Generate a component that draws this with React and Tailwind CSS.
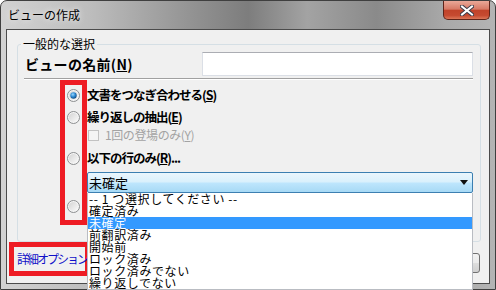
import React from "react";

function Radio({ checked }) {
  return (
    <svg width="13" height="13" viewBox="0 0 13 13" className="shrink-0">
      <defs>
        <linearGradient id="rbIn" x1="0" y1="0" x2="1" y2="1">
          <stop offset="0" stopColor="#d4d4d4" />
          <stop offset="1" stopColor="#fafafa" />
        </linearGradient>
        <radialGradient id="rbDot" cx="0.4" cy="0.35" r="0.75">
          <stop offset="0" stopColor="#9ad8ff" />
          <stop offset="0.5" stopColor="#2a86d0" />
          <stop offset="1" stopColor="#0d3a6a" />
        </radialGradient>
      </defs>
      <circle cx="6.5" cy="6.5" r="6" fill="#f6f6f6" stroke="#8c8e90" strokeWidth="1" />
      <circle cx="6.5" cy="6.5" r="4.6" fill="url(#rbIn)" />
      {checked && <circle cx="6.5" cy="6.5" r="3.2" fill="url(#rbDot)" />}
    </svg>
  );
}

const items = [
  "-- 1 つ選択してください --",
  "確定済み",
  "未確定",
  "前翻訳済み",
  "開始前",
  "ロック済み",
  "ロック済みでない",
  "繰り返しでない",
];

export default function App() {
  return (
    <div className="relative w-[496px] h-[290px] overflow-hidden bg-white font-['Noto_Sans_CJK_JP',sans-serif] text-black">
      <div className="flex flex-col h-[290px] border border-[#3f3f3f] rounded-t-[7px] bg-[linear-gradient(90deg,#d2d2d2_0%,#bdbdbd_18%,#949494_38%,#7d7d7d_50%,#a3a3a3_62%,#8a8a8a_76%,#a9a9a9_90%,#b4b4b4_100%)]">
        {/* title bar */}
        <div className="flex h-[28px] items-start pl-[7px]">
          <span className="mt-[6px] text-[12px] leading-[16px] [text-shadow:0_0_6px_#ffffff]">ビューの作成</span>
          <div className="ml-auto mr-[5px] w-[47px] h-[19px] flex items-center justify-center border border-t-0 border-[#5e2419] rounded-b-[5px] bg-[linear-gradient(180deg,#eaa898_0%,#d77a66_45%,#c1432a_52%,#c54a30_80%,#dc7658_100%)]">
            <svg width="14" height="11" viewBox="0 0 14 11">
              <path d="M2 1.5 L12 9.5 M12 1.5 L2 9.5" stroke="#3b3b48" strokeWidth="4" strokeLinecap="square" />
              <path d="M2 1.5 L12 9.5 M12 1.5 L2 9.5" stroke="#ffffff" strokeWidth="2" strokeLinecap="square" />
            </svg>
          </div>
        </div>
        {/* body */}
        <div className="flex-1 flex px-[5px] pb-[5px]">
          <div className="flex-1 flex flex-col border border-[#4b4b4b] bg-[#f0f0f0]">
            <fieldset className="mt-[7px] ml-[10px] mr-[8px] border border-[#d5dfe5] rounded-[3px] pb-[27px]">
              <legend className="ml-[3px] px-[2px] text-[12px] leading-[14px]">一般的な選択</legend>
              {/* name row */}
              <div className="mt-[1px] flex items-center pl-[7px] pr-[7px]">
                <span className="text-[14px] font-bold leading-[18px] tracking-[0.3px]">
                  ビューの名前(<span className="underline">N</span>)
                </span>
                <div className="ml-auto w-[271px] h-[24px] bg-white border border-[#dbdfe6] border-t-[#abadb3]" />
              </div>
              <div className="mt-[2px] ml-[6px] mr-[7px] h-[2px] border-t border-[#a0a0a0] border-b border-b-white" />
              {/* radio block */}
              <div className="flex flex-col pl-[49px] pr-[7px]">
                <div className="mt-[7px] h-[16px] flex items-center gap-[7px]">
                  <Radio checked />
                  <span className="text-[12.5px] font-bold leading-[16px] tracking-[-1px]">
                    文書をつなぎ合わせる(<span className="underline">S</span>)
                  </span>
                </div>
                <div className="mt-[6px] h-[16px] flex items-center gap-[7px]">
                  <Radio />
                  <span className="text-[12.5px] font-bold leading-[16px] tracking-[-1px]">
                    繰り返しの抽出(<span className="underline">E</span>)
                  </span>
                </div>
                <div className="mt-[2px] h-[16px] flex items-center pl-[21px] gap-[6px]">
                  <div className="w-[11px] h-[11px] border border-[#c2c2c2] bg-[#f4f4f4]" />
                  <span className="text-[12px] leading-[16px] text-[#a3a3a3] tracking-[-0.4px]">
                    1回の登場のみ(<span className="underline">Y</span>)
                  </span>
                </div>
                <div className="mt-[7px] h-[16px] flex items-center gap-[7px]">
                  <Radio />
                  <span className="text-[12.5px] font-bold leading-[16px] tracking-[-1px]">
                    以下の行のみ(<span className="underline">R</span>)...
                  </span>
                </div>
                {/* combo */}
                <div className="relative mt-[6px] ml-[20px] h-[21px]">
                  <div className="h-[21px] flex items-center pl-[1px] pr-[4px] border border-[#3c7fb1] rounded-[2px] bg-[linear-gradient(180deg,#eaf6fd_0%,#d9f0fc_48%,#bee6fd_52%,#a7d9f5_100%)]">
                    <span className="text-[13px] leading-[16px]">未確定</span>
                    <svg className="ml-auto" width="8" height="5" viewBox="0 0 8 5">
                      <polygon points="0,0 8,0 4,5" fill="#111" />
                    </svg>
                  </div>
                  <div className="absolute z-10 top-full left-0 right-0 bg-white border-x border-b border-[#b9bcc2]">
                    {items.map((t) => (
                      <div
                        key={t}
                        className={
                          t === "未確定"
                            ? "h-[12px] pl-[1px] text-[12px] leading-[12px] tracking-[0.6px] whitespace-nowrap bg-[#3399ff] text-white"
                            : "h-[12px] pl-[1px] text-[12px] leading-[12px] tracking-[0.6px] whitespace-nowrap"
                        }
                      >
                        {t}
                      </div>
                    ))}
                  </div>
                </div>
                <div className="mt-[5px] h-[16px] flex items-center">
                  <Radio />
                </div>
              </div>
            </fieldset>
            {/* bottom row */}
            <div className="flex items-start">
              <div className="ml-[2px] w-[81px] h-[34px] border-[5px] border-[#ee1c24] flex items-center pl-[3px]">
                <span className="text-[12px] leading-[14px] text-[#1010c8] tracking-[-2px] whitespace-nowrap">詳細オプション</span>
              </div>
              <div className="ml-auto mr-[9px] mt-[11px] w-[75px] h-[20px] rounded-[3px] border border-[#707070] bg-[linear-gradient(180deg,#f2f2f2_0%,#ebebeb_48%,#dddddd_52%,#cfcfcf_100%)] flex items-center justify-center text-[12px]">
                OK
              </div>
            </div>
          </div>
        </div>
      </div>
      {/* annotation overlay */}
      <div className="absolute z-20 left-[60px] top-[80px] w-[27px] h-[145px] border-[5px] border-[#ee1c24]" />
    </div>
  );
}
